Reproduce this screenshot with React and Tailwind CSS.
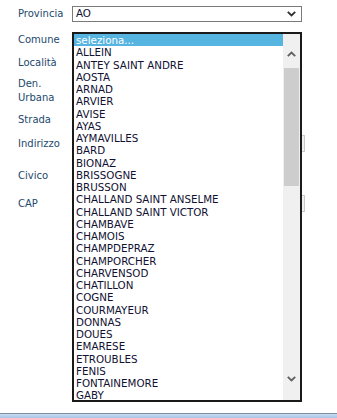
import React from "react";

const comuni = [
  "ALLEIN","ANTEY SAINT ANDRE","AOSTA","ARNAD","ARVIER","AVISE","AYAS","AYMAVILLES","BARD","BIONAZ",
  "BRISSOGNE","BRUSSON","CHALLAND SAINT ANSELME","CHALLAND SAINT VICTOR","CHAMBAVE","CHAMOIS",
  "CHAMPDEPRAZ","CHAMPORCHER","CHARVENSOD","CHATILLON","COGNE","COURMAYEUR","DONNAS","DOUES",
  "EMARESE","ETROUBLES","FENIS","FONTAINEMORE","GABY",
];

function Chevron({ down = true, className = "" }) {
  return (
    <svg width="9" height="6" viewBox="0 0 9 6" className={className}>
      {down ? (
        <polyline points="0.8,0.8 4.5,4.5 8.2,0.8" fill="none" stroke="currentColor" strokeWidth="1.8" />
      ) : (
        <polyline points="0.8,5.2 4.5,1.5 8.2,5.2" fill="none" stroke="currentColor" strokeWidth="1.8" />
      )}
    </svg>
  );
}

function Label({ children }) {
  return <div className="w-[54px] shrink-0 text-[#23496d] leading-[14px]">{children}</div>;
}

export default function App() {
  return (
    <div className="flex flex-col w-[337px] h-[418px] bg-white overflow-hidden font-['DejaVu_Sans','Verdana',sans-serif] text-[10px]">
      <div className="relative flex-1">
        <div className="flex flex-col pl-[18px] pt-[6px]">
          <div className="flex items-center h-[16px]">
            <Label>Provincia</Label>
            <div className="flex items-center justify-between w-[230px] h-[16px] border border-[#7a7a7a] pl-[3px] pr-[5px] text-[#111133] text-[10.3px]">
              <span>AO</span>
              <Chevron className="text-[#303030]" />
            </div>
          </div>
          <div className="flex items-center h-[16px] mt-[10px]">
            <Label>Comune</Label>
          </div>
          <div className="flex items-center h-[16px] mt-[7px]">
            <Label>Località</Label>
          </div>
          <div className="flex items-center h-[28px] mt-[6px]">
            <Label>Den.<br />Urbana</Label>
          </div>
          <div className="flex items-center h-[16px] mt-[7px]">
            <Label>Strada</Label>
          </div>
          <div className="flex items-center h-[17px] mt-[7px]">
            <Label>Indirizzo</Label>
            <div className="w-[233px] h-[17px] border border-[#c8c8c8] bg-[#f0f0f0]" />
          </div>
          <div className="flex items-center h-[16px] mt-[16px]">
            <Label>Civico</Label>
          </div>
          <div className="flex items-center h-[17px] mt-[11px]">
            <Label>CAP</Label>
            <div className="w-[233px] h-[17px] border border-[#c8c8c8] bg-[#f0f0f0]" />
          </div>
        </div>

        <div className="absolute left-[72px] top-[32px] w-[230px] h-[370px] border-2 border-[#1a1a1a] bg-white flex overflow-hidden">
          <div className="flex-1 flex flex-col text-[#111133] text-[10.3px]">
            <div className="h-[12.25px] leading-[12.25px] pl-[2px] bg-[#56b4e0] text-white shrink-0">seleziona...</div>
            {comuni.map((c) => (
              <div key={c} className="h-[12.25px] leading-[12.25px] pl-[2px] shrink-0 whitespace-nowrap">{c}</div>
            ))}
          </div>
          <div className="w-[17px] shrink-0 bg-[#f0f0f0] flex flex-col">
            <div className="h-[34px] flex items-center justify-center pt-[6px] text-[#606060]">
              <Chevron down={false} />
            </div>
            <div className="mx-[1px] h-[118px] bg-[#cdcdcd]" />
            <div className="flex-1" />
            <div className="h-[42px] flex items-center justify-center text-[#606060]">
              <Chevron />
            </div>
          </div>
        </div>
      </div>
      <div className="h-[5px] shrink-0 border-t border-[#7d8ea5] bg-gradient-to-b from-[#c9dcf0] to-[#a9c4e2]" />
    </div>
  );
}
